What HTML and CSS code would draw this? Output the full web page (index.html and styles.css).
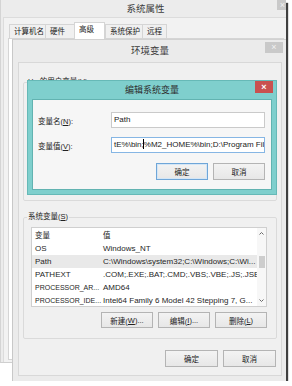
FILE: index.html
```html
<!DOCTYPE html>
<html lang="zh-CN">
<head>
  <meta charset="UTF-8" />
  <title>系统属性</title>
  <link rel="stylesheet" href="styles.css">
</head>
<body>
  <div class="shot">
    <div class="win sys">
      <div class="titlebar">系统属性<span class="close gray">×</span></div>
      <div class="client">
        <div class="tabs">
          <span class="tab tab-name">计算机名</span>
          <span class="tab tab-hw">硬件</span>
          <span class="tab tab-adv on">高级</span>
          <span class="tab tab-prot">系统保护</span>
          <span class="tab tab-remote">远程</span>
        </div>
        <div class="panel"></div>
      </div>
    </div>

    <div class="win env">
      <div class="titlebar">环境变量<span class="close gray">×</span></div>
      <div class="client">
        <fieldset class="group user">
          <legend>Hu 的用户变量(<u>U</u>)</legend>
        </fieldset>

        <fieldset class="group sysvars">
          <legend>系统变量(<u>S</u>)</legend>
          <div class="list">
            <div class="rows">
              <div class="row head"><span class="c1">变量</span><span>值</span></div>
              <div class="row"><span class="c1">OS</span><span>Windows_NT</span></div>
              <div class="row sel"><span class="c1">Path</span><span>C:\Windows\system32;C:\Windows;C:\Wi...</span></div>
              <div class="row"><span class="c1">PATHEXT</span><span>.COM;.EXE;.BAT;.CMD;.VBS;.VBE;.JS;.JSE;...</span></div>
              <div class="row"><span class="c1 tight">PROCESSOR_AR...</span><span>AMD64</span></div>
              <div class="row"><span class="c1 tight">PROCESSOR_IDE...</span><span>Intel64 Family 6 Model 42 Stepping 7, G...</span></div>
            </div>
            <div class="scrollbar">
              <div class="arrow">
                <svg width="5" height="3" viewBox="0 0 5 3"><path d="M0.5 2.5 L2.5 0.5 L4.5 2.5" fill="none" stroke="#6a6a6a" stroke-width="1"/></svg>
              </div>
              <div class="track"><div class="thumb"></div></div>
              <div class="arrow">
                <svg width="5" height="3" viewBox="0 0 5 3"><path d="M0.5 0.5 L2.5 2.5 L4.5 0.5" fill="none" stroke="#6a6a6a" stroke-width="1"/></svg>
              </div>
            </div>
          </div>
          <div class="btnrow small">
            <span class="btn">新建(<u>W</u>)...</span>
            <span class="btn">编辑(<u>I</u>)...</span>
            <span class="btn">删除(<u>L</u>)</span>
          </div>
        </fieldset>

        <div class="btnrow bottom">
          <span class="btn">确定</span>
          <span class="btn">取消</span>
        </div>
      </div>
    </div>

    <div class="win edit">
      <div class="titlebar">编辑系统变量<span class="close red">×</span></div>
      <div class="client">
        <div class="field">
          <span class="lbl">变量名(<u>N</u>):</span>
          <div class="input">Path</div>
        </div>
        <div class="field">
          <span class="lbl">变量值(<u>V</u>):</span>
          <div class="input focus">tE%\bin;<span class="caret"></span>%M2_HOME%\bin;D:\Program Files\Java</div>
        </div>
        <div class="btnrow dlg">
          <span class="btn default">确定</span>
          <span class="btn">取消</span>
        </div>
      </div>
    </div>
  </div>
</body>
</html>
```

FILE: styles.css
```css
* {
  box-sizing: border-box;
}
body {
  margin: 0;
  background: #fff;
  font-family: "Liberation Sans", "Noto Sans CJK SC", sans-serif;
  font-size: 8px;
  color: #1e1e1e;
}
.shot {
  position: relative;
  width: 286px;
  height: 381px;
  overflow: hidden;
  background: #fff;
  box-shadow: 2px 3px 1px rgba(0, 0, 0, .75);
}

/* windows */
.win {
  position: absolute;
  background: #ececec;
}
.titlebar {
  position: relative;
  text-align: center;
  color: #3c3c3c;
  font-size: 9.5px;
}
.close {
  position: absolute;
  top: 0;
  display: flex;
  align-items: center;
  justify-content: center;
  color: #fff;
  font-size: 9px;
  line-height: 1;
}
.close.gray {
  background: #c9c9c9;
  color: #f2f2f2;
}
.close.red {
  background: #c9514f;
  font-weight: bold;
}

/* system properties */
.sys {
  left: 0;
  top: 0;
  width: 290px;
  height: 363px;
  border-left: 1px solid #d4d4d4;
  border-bottom: 1px solid #cfcfcf;
}
.sys .titlebar {
  height: 17px;
  line-height: 18px;
}
.sys .close {
  right: 2px;
  width: 11px;
  height: 10px;
}
.sys .client {
  margin-left: 2px;
  height: 345px;
  background: #f2f2f2;
  border-top: 1px solid #dcdcdc;
  border-left: 1px solid #dcdcdc;
  padding: 4px 0 0 4px;
}
.tabs {
  display: flex;
  align-items: flex-end;
  height: 16px;
  margin-left: 1px;
}
.tab {
  height: 14px;
  padding-left: 4px;
  border: 1px solid #d5d5d5;
  border-bottom: none;
  border-right: none;
  background: #f0f0f0;
  font-size: 7.5px;
  line-height: 13px;
  color: #222;
}
.tab-name { width: 36px; }
.tab-hw { width: 29px; }
.tab-adv { width: 31px; }
.tab-prot { width: 37px; }
.tab-remote { width: 25px; border-right: 1px solid #d5d5d5; }
.tab.on {
  position: relative;
  z-index: 1;
  height: 17px;
  margin-bottom: -1px;
  background: #fff;
  border-right: 1px solid #d5d5d5;
  line-height: 14px;
}
.panel {
  height: 322px;
  margin-right: 6px;
  border: 1px solid #d5d5d5;
  background: #fff;
}

/* environment variables */
.env {
  left: 12px;
  top: 39px;
  width: 275px;
  height: 342px;
  background: #ebebeb;
  border-top: 1px solid #d2d2d2;
  border-left: 1px solid #c8c8c8;
}
.env .titlebar {
  height: 22px;
  line-height: 22px;
}
.env .close {
  right: 4px;
  top: 2px;
  width: 18px;
  height: 11px;
}
.env .client {
  margin: 0 5px;
  height: 314px;
  background: #f0f0f0;
  border: 1px solid #d8d8d8;
  padding: 0 4px;
}
.group {
  margin: 0;
  padding: 5px 9px 10px 7px;
  border: 1px solid #dadada;
  border-radius: 2px;
  min-width: 0;
}
.group legend {
  margin-left: -4px;
  padding: 0 1px;
  font-size: 7.5px;
  line-height: 10px;
  color: #222;
}
.user {
  margin-top: 14px;
  height: 124px;
}
.sysvars {
  margin-top: 11px;
}

.list {
  display: flex;
  height: 80px;
  border: 1px solid #cfcfcf;
  background: #fff;
  overflow: hidden;
}
.rows {
  flex: 1;
  min-width: 0;
  padding-top: 1px;
}
.row {
  display: flex;
  height: 13px;
  line-height: 13px;
  padding-left: 3px;
  white-space: nowrap;
  color: #262626;
}
.row.head {
  height: 13px;
  font-size: 7.5px;
}
.row.sel {
  background: #e9e9e9;
}
.c1 {
  width: 68px;
  flex: none;
}
.c1.tight {
  font-size: 7px;
}
.scrollbar {
  width: 9px;
  flex: none;
  display: flex;
  flex-direction: column;
  background: #f7f7f7;
}
.arrow {
  height: 11px;
  display: flex;
  align-items: center;
  justify-content: center;
  flex: none;
}
.track {
  flex: 1;
}
.thumb {
  margin: 17px 1px 0 2px;
  height: 12px;
  background: #cdcdcd;
}

/* buttons */
.btnrow {
  display: flex;
  justify-content: flex-end;
}
.btn {
  display: flex;
  align-items: center;
  justify-content: center;
  border: 1px solid #b4b4b4;
  background: linear-gradient(#f3f3f3, #e7e7e7);
  font-size: 7.5px;
  color: #222;
}
.btnrow.small {
  margin-top: 5px;
  gap: 5px;
}
.btnrow.small .btn {
  width: 52px;
  height: 16px;
}
.btnrow.bottom {
  margin-top: 11px;
  margin-right: 1px;
  gap: 5px;
}
.btnrow.bottom .btn {
  width: 53px;
  height: 17px;
}

/* edit dialog */
.edit {
  left: 27px;
  top: 80px;
  width: 250px;
  height: 115px;
  background: #7fcfcd;
  border: 1px solid #66b9b7;
}
.edit .titlebar {
  height: 18px;
  line-height: 18px;
  font-size: 9px;
  color: #2e2e2e;
}
.edit .close {
  right: 3px;
  width: 18px;
  height: 12px;
}
.edit .client {
  margin: 0 4px;
  height: 91px;
  background: #f6f6f6;
  border: 1px solid #62b3b1;
  padding: 12px 6px 0 5px;
}
.field {
  display: grid;
  grid-template-columns: 73px 1fr;
  align-items: center;
  height: 16px;
}
.field + .field {
  margin-top: 9px;
}
.lbl {
  font-size: 7.5px;
  color: #222;
}
.input {
  height: 16px;
  border: 1px solid #cacaca;
  background: #fff;
  padding-left: 2px;
  line-height: 14px;
  white-space: nowrap;
  overflow: hidden;
  color: #222;
}
.input.focus {
  border-color: #86b6e4;
}
.caret {
  display: inline-block;
  width: 1px;
  height: 10px;
  margin-left: -1px;
  background: #000;
  vertical-align: -2px;
}
.btnrow.dlg {
  margin-top: 10px;
  gap: 5px;
}
.btnrow.dlg .btn {
  width: 52px;
  height: 17px;
}
.btn.default {
  border-color: #6fa6d8;
  box-shadow: inset 0 0 0 1px #d4e6f6;
}
```
